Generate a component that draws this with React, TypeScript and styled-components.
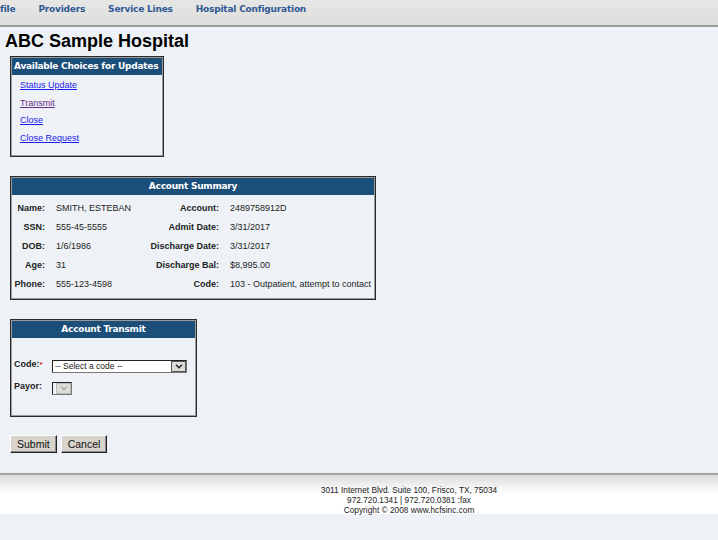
import styled, { createGlobalStyle } from 'styled-components';

const GlobalStyle = createGlobalStyle`
  html, body {
    margin: 0;
    padding: 0;
    background: #eef2f7;
    font-family: 'Liberation Sans', Arial, sans-serif;
  }
`;

const navItems = ['file', 'Providers', 'Service Lines', 'Hospital Configuration'];

const summaryRows = [
  ['Name:', 'SMITH, ESTEBAN', 'Account:', '2489758912D'],
  ['SSN:', '555-45-5555', 'Admit Date:', '3/31/2017'],
  ['DOB:', '1/6/1986', 'Discharge Date:', '3/31/2017'],
  ['Age:', '31', 'Discharge Bal:', '$8,995.00'],
  ['Phone:', '555-123-4598', 'Code:', '103 - Outpatient, attempt to contact'],
];

function App() {
  return (
    <Page>
      <GlobalStyle />
      <NavBar>
        {navItems.map((item) => (
          <NavLink key={item}>{item}</NavLink>
        ))}
      </NavBar>

      <Content>
        <Title>ABC Sample Hospital</Title>

        <Panel $width={154}>
          <PanelHeader $align='left'>Available Choices for Updates</PanelHeader>
          <ChoiceList>
            <Choice>Status Update</Choice>
            <Choice $visited>Transmit</Choice>
            <Choice>Close</Choice>
            <Choice>Close Request</Choice>
          </ChoiceList>
        </Panel>

        <Panel $width={366}>
          <PanelHeader>Account Summary</PanelHeader>
          <SummaryTable>
            <tbody>
              {summaryRows.map((r) => (
                <tr key={r[0]}>
                  <Label $width={33}>{r[0]}</Label>
                  <Value $width={80}>{r[1]}</Value>
                  <Label $width={83}>{r[2]}</Label>
                  <Value>{r[3]}</Value>
                </tr>
              ))}
            </tbody>
          </SummaryTable>
        </Panel>

        <Panel $width={187}>
          <PanelHeader>Account Transmit</PanelHeader>
          <Form>
            <FormRow>
              <FieldLabel>
                Code:<Req>*</Req>
              </FieldLabel>
              <FakeSelect $width={135}>
                <span>-- Select a code --</span>
                <Arrow>
                  <svg width='8' height='5' viewBox='0 0 8 5'>
                    <path d='M1 0.8 L4 3.8 L7 0.8' stroke='#222' strokeWidth='1.5' fill='none' />
                  </svg>
                </Arrow>
              </FakeSelect>
            </FormRow>
            <FormRow>
              <FieldLabel>Payor:</FieldLabel>
              <FakeSelect $width={20} $disabled>
                <span />
                <Arrow $disabled>
                  <svg width='8' height='5' viewBox='0 0 8 5'>
                    <path d='M1 0.8 L4 3.8 L7 0.8' stroke='#aaa' strokeWidth='1.3' fill='none' />
                  </svg>
                </Arrow>
              </FakeSelect>
            </FormRow>
          </Form>
        </Panel>

        <Buttons>
          <Button>Submit</Button>
          <Button>Cancel</Button>
        </Buttons>
      </Content>

      <Footer>
        <div>3011 Internet Blvd. Suite 100, Frisco, TX, 75034</div>
        <div>972.720.1341 | 972.720.0381 :fax</div>
        <div>Copyright © 2008 www.hcfsinc.com</div>
      </Footer>
    </Page>
  );
}

const Page = styled.div`
  width: 718px;
  min-height: 540px;
  background: #eef2f7;
`;

const NavBar = styled.div`
  height: 27px;
  box-sizing: border-box;
  display: flex;
  align-items: flex-start;
  gap: 23px;
  padding-top: 4px;
  background: linear-gradient(#e6e6e4, #dededc);
  border-bottom: 2px solid #9a9a9a;
`;

const NavLink = styled.span`
  font-family: 'DejaVu Sans', Tahoma, sans-serif;
  font-weight: bold;
  font-size: 9px;
  line-height: 11px;
  letter-spacing: -0.2px;
  color: #2f5894;
`;

const Content = styled.div`
  padding: 3px 10px 0 10px;
  display: flex;
  flex-direction: column;
  align-items: flex-start;
`;

const Title = styled.h1`
  margin: 0 0 4px -5px;
  font-size: 18px;
  font-weight: bold;
  color: #000;
  line-height: 22px;
`;

const Panel = styled.div<{ $width: number }>`
  width: ${(p) => p.$width}px;
  box-sizing: border-box;
  border: 1px solid #2a2a2a;
  box-shadow: inset 0 0 0 1px #9a9a9a;
  padding: 1px;
  margin-bottom: 19px;
`;

const PanelHeader = styled.div<{ $align?: string }>`
  background: #1c4e7a;
  color: #fff;
  font-family: 'DejaVu Sans', Tahoma, sans-serif;
  font-weight: bold;
  font-size: 9px;
  letter-spacing: -0.25px;
  height: 17px;
  line-height: 17px;
  padding: 0 2px;
  white-space: nowrap;
  text-align: ${(p) => p.$align || 'center'};
`;

const ChoiceList = styled.div`
  display: flex;
  flex-direction: column;
  align-items: flex-start;
  gap: 6.6px;
  padding: 5px 0 11px 8px;
`;

const Choice = styled.a<{ $visited?: boolean }>`
  font-size: 9px;
  line-height: 11px;
  color: ${(p) => (p.$visited ? '#6a2a8a' : '#1a1aee')};
  text-decoration: underline;
  cursor: pointer;
`;

const SummaryTable = styled.table`
  border-collapse: collapse;
  margin: 4px 0 4px 0;
  font-size: 9px;
  color: #222;
  td {
    padding: 0;
    height: 19px;
  }
`;

const Label = styled.td<{ $width: number }>`
  font-weight: bold;
  text-align: right;
  width: ${(p) => p.$width}px;
  padding-right: 11px !important;
  white-space: nowrap;
`;

const Value = styled.td<{ $width?: number }>`
  width: ${(p) => (p.$width ? `${p.$width}px` : 'auto')};
  white-space: nowrap;
`;

const Form = styled.div`
  padding: 22px 0 20px 2px;
  display: flex;
  flex-direction: column;
  gap: 9px;
`;

const FormRow = styled.div`
  display: flex;
  align-items: flex-start;
`;

const FieldLabel = styled.span`
  width: 38px;
  font-size: 9px;
  font-weight: bold;
  color: #222;
  line-height: 11px;
  margin-top: -1px;
`;

const Req = styled.span`
  color: #d02020;
  font-size: 8px;
  vertical-align: top;
`;

const FakeSelect = styled.div<{ $width: number; $disabled?: boolean }>`
  width: ${(p) => p.$width}px;
  height: 13px;
  box-sizing: border-box;
  display: flex;
  align-items: center;
  justify-content: space-between;
  background: ${(p) => (p.$disabled ? '#eef2f7' : '#fff')};
  border: 1px solid #777;
  border-left-color: #222;
  border-top-color: #222;
  font-size: 8.5px;
  color: #222;
  span {
    padding-left: 2px;
  }
`;

const Arrow = styled.div<{ $disabled?: boolean }>`
  width: 15px;
  height: 11px;
  display: flex;
  align-items: center;
  justify-content: center;
  background: #dcdcd8;
  border: 1px solid ${(p) => (p.$disabled ? '#bbb' : '#555')};
  box-sizing: border-box;
`;

const Buttons = styled.div`
  display: flex;
  gap: 4px;
  margin-top: -1px;
`;

const Button = styled.button`
  font-family: 'Liberation Sans', Arial, sans-serif;
  font-size: 10.5px;
  color: #111;
  background: #d8d4cc;
  height: 18px;
  padding: 0 6px;
  border: 1px solid;
  border-color: #fff #222 #222 #fff;
  box-shadow: inset -1px -1px 0 #888;
`;

const Footer = styled.div`
  margin-top: 20px;
  border-top: 2px solid #a4a4a4;
  background: linear-gradient(#dcdcdc 0px, #ffffff 18px, #ffffff 100%);
  height: 29px;
  padding: 10px 0 0 100px;
  text-align: center;
  font-size: 8.3px;
  line-height: 10px;
  color: #222;
`;

export default App;
